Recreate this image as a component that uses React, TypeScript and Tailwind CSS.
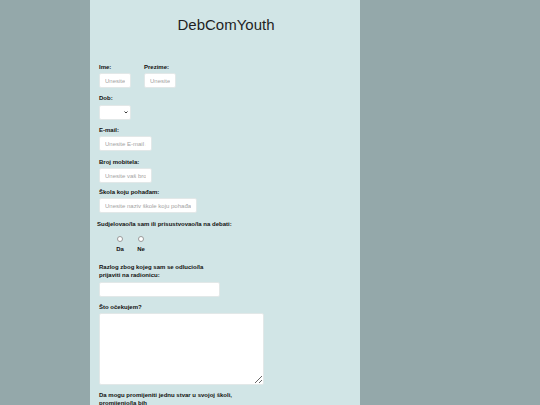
import React from "react";

const labelCls = "block text-[6px] leading-[8px] font-bold text-[#111]";
const inputCls =
  "block h-[15px] rounded-[2px] bg-white border border-[#e2e8e8] px-[5px] text-[6px] outline-none placeholder:text-[#a3a3a3]";

const Field = ({ label, placeholder, width, className = "" }: { label: string; placeholder?: string; width: string; className?: string }) => (
  <div className={className}>
    <label className={labelCls}>{label}</label>
    <input className={`${inputCls} mt-[2px] ${width}`} placeholder={placeholder} />
  </div>
);

export default function App() {
  return (
    <div className="min-h-screen w-full bg-[#94a8aa] flex pl-[90px]" style={{ fontFamily: '"Liberation Sans", Arial, sans-serif' }}>
      <div className="w-[270px] min-h-[405px] bg-[#d1e5e6] pt-[16px] pl-[9px] pb-4">
        <h1 className="text-center text-[15px] leading-[18px] text-[#1f1f1f] pr-[7px]">DebComYouth</h1>

        {/* ime + prezime */}
        <div className="flex gap-[13px] mt-[29px]">
          <Field label="Ime:" placeholder="Unesite" width="w-[32px]" />
          <Field label="Prezime:" placeholder="Unesite" width="w-[32px]" />
        </div>

        <div className="mt-[6px]">
          <label className={labelCls}>Dob:</label>
          <div className="relative mt-[3px] w-[32px]">
            <select className="block appearance-none h-[15px] w-[32px] rounded-[2px] bg-white border border-[#e2e8e8] text-[6px] outline-none" />
            <svg className="absolute right-[3px] top-[6px]" width="4" height="3" viewBox="0 0 8 6">
              <path d="M1 1l3 3 3-3" fill="none" stroke="#222" strokeWidth="1.8" />
            </svg>
          </div>
        </div>

        <Field label="E-mail:" placeholder="Unesite E-mail adresu" width="w-[53px]" className="mt-[6px]" />
        <Field label="Broj mobitela:" placeholder="Unesite vaš broj mobitela" width="w-[53px]" className="mt-[7px]" />
        <Field label="Škola koju pohađam:" placeholder="Unesite naziv škole koju pohađate" width="w-[98px]" className="mt-[5px]" />

        <div className="mt-[7px]">
          <label className={`${labelCls} -ml-[2px]`}>Sudjelovao/la sam ili prisustvovao/la na debati:</label>
          <div className="flex gap-[7px] ml-[14px] mt-[8px]">
            <div className="w-[14px] flex flex-col items-center">
              <input type="radio" name="deb" className="appearance-none w-[6px] h-[6px] rounded-full bg-white border border-[#9a9a9a]" />
              <span className={`${labelCls} mt-[3px]`}>Da</span>
            </div>
            <div className="w-[14px] flex flex-col items-center">
              <input type="radio" name="deb" className="appearance-none w-[6px] h-[6px] rounded-full bg-white border border-[#9a9a9a]" />
              <span className={`${labelCls} mt-[3px]`}>Ne</span>
            </div>
          </div>
        </div>

        <div className="mt-[10px]">
          <label className={labelCls}>
            Razlog zbog kojeg sam se odlucio/la
            <br />
            prijaviti na radionicu:
          </label>
          <input className={`${inputCls} mt-[3px] w-[121px] h-[14px]`} />
        </div>

        <div className="mt-[6px]">
          <label className={labelCls}>Što očekujem?</label>
          <textarea className="block mt-[2px] w-[165px] h-[72px] rounded-[2px] bg-white border border-[#e2e8e8] text-[6px] outline-none" />
        </div>

        <div className="mt-[6px]">
          <label className={labelCls}>
            Da mogu promijeniti jednu stvar u svojoj školi,
            <br />
            promijenio/la bih
          </label>
        </div>
      </div>
    </div>
  );
}
